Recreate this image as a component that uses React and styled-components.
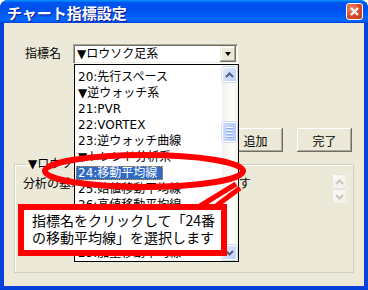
import styled, { createGlobalStyle } from "styled-components";

const GlobalStyle = createGlobalStyle`
  html, body {
    margin: 0;
    padding: 0;
    background: #fff;
  }
  body {
    font-family: "DejaVu Sans", "Noto Sans CJK JP", sans-serif;
    font-size: 12px;
    color: #000;
  }
`;

const Window = styled.div`
  position: relative;
  width: 368px;
  height: 290px;
  display: flex;
  flex-direction: column;
  background: #0841d8;
  border-radius: 8px 8px 0 0;
  overflow: hidden;
`;

const TitleBar = styled.div`
  height: 23px;
  flex-shrink: 0;
  display: flex;
  align-items: center;
  justify-content: space-between;
  padding: 0 5px 0 7px;
  background: linear-gradient(
    #0997ff 0%,
    #0053ee 12%,
    #0050ee 40%,
    #0066ff 85%,
    #0060ff 92%,
    #003dd7 100%
  );
`;

const TitleText = styled.span`
  font-family: "Noto Sans CJK JP", sans-serif;
  font-weight: 700;
  font-size: 15px;
  line-height: 15px;
  margin-top: 2px;
  color: #fff;
  text-shadow: 1px 1px #0f1089;
`;

const CloseButton = styled.div`
  width: 17px;
  height: 17px;
  box-sizing: border-box;
  border: 1px solid #fff;
  border-radius: 3px;
  background: radial-gradient(circle at 30% 30%, #f08a6c, #d9482a 55%, #c0391a);
  display: flex;
  align-items: center;
  justify-content: center;
`;

const Body = styled.div`
  flex: 1;
  margin: 0 4px 4px;
  background: #ece9d8;
  padding-top: 21px;
  display: flex;
  flex-direction: column;
`;

const FieldRow = styled.div`
  display: flex;
  align-items: center;
  gap: 12px;
  padding-left: 21px;
`;

const Label = styled.span`
  font-size: 12px;
  line-height: 14px;
`;

const Combo = styled.div`
  position: relative;
  width: 165px;
  height: 20px;
  box-sizing: border-box;
  background: #fff;
  border: 1px solid;
  border-color: #aca899 #fff #fff #aca899;
  box-shadow: inset 1px 1px #716f64, inset -1px -1px #f1efe2;
  display: flex;
  align-items: center;
  padding: 1px;
`;

const ComboText = styled.span`
  flex: 1;
  padding-left: 2px;
  line-height: 16px;
`;

const DropButton = styled.div`
  width: 16px;
  height: 16px;
  box-sizing: border-box;
  background: #ece9d8;
  box-shadow: inset -1px -1px #716f64, inset 1px 1px #f1efe2,
    inset -2px -2px #aca899, inset 2px 2px #fff;
  display: flex;
  align-items: center;
  justify-content: center;

  &::after {
    content: "";
    border-left: 3.5px solid transparent;
    border-right: 3.5px solid transparent;
    border-top: 4px solid #000;
  }
`;

const ListBox = styled.div`
  position: absolute;
  top: calc(100% + 1px);
  left: 0;
  width: 165px;
  height: 198px;
  box-sizing: border-box;
  border: 1px solid #000;
  background: #fff;
  display: flex;
  z-index: 2;
`;

const Items = styled.div`
  flex: 1;
  padding-top: 4px;
  overflow: hidden;
`;

const Item = styled.div`
  height: 16px;
  line-height: 16px;
  padding-left: 1px;
  white-space: nowrap;
`;

const ItemText = styled.span`
  display: inline-block;
  padding: 0 5px 0 1px;
  line-height: 12px;
  border: 1px solid transparent;
  ${(p) =>
    p.$selected &&
    `
    background: #316ac5;
    color: #fff;
    border: 1px dotted #ce953a;
  `}
`;

const ScrollBar = styled.div`
  width: 16px;
  display: flex;
  flex-direction: column;
  padding: 2px 0 0;
  box-sizing: border-box;
  background: linear-gradient(to right, #f3f1ec, #fefefb 70%, #f0efe6);
`;

const ScrollArrow = styled.div`
  width: 15px;
  height: 15px;
  box-sizing: border-box;
  border-radius: 2px;
  border: 1px solid ${(p) => (p.$disabled ? "#e8e6dc" : "#fff")};
  background: ${(p) =>
    p.$disabled
      ? "linear-gradient(135deg, #fbfbf8, #f0efe8)"
      : "linear-gradient(135deg, #e3ecfe, #bcd0fa)"};
  box-shadow: ${(p) => (p.$disabled ? "none" : "0 0 0 0.5px #a7bdf0")};
  display: flex;
  align-items: center;
  justify-content: center;
`;

const Thumb = styled.div`
  width: 15px;
  height: 20px;
  margin-top: ${(p) => p.$offset}px;
  box-sizing: border-box;
  border: 1px solid #fff;
  border-radius: 2px;
  background: linear-gradient(to right, #c9d8fc, #b6cbf9);
  box-shadow: 0 0 0 0.5px #a7bdf0;
  display: flex;
  flex-direction: column;
  align-items: center;
  justify-content: center;
  gap: 1px;
`;

const Grip = styled.div`
  width: 7px;
  height: 1px;
  background: #eef4fe;
  border-bottom: 1px solid #8cb0f8;
`;

const Spacer = styled.div`
  flex: 1;
`;

const ButtonRow = styled.div`
  display: flex;
  justify-content: flex-end;
  gap: 14px;
  padding-right: 12px;
  margin-top: 64px;
`;

const Button = styled.div`
  width: 55px;
  height: 24px;
  box-sizing: border-box;
  background: #ece9d8;
  box-shadow: inset -1px -1px #716f64, inset 1px 1px #fff,
    inset -2px -2px #aca899;
  display: flex;
  align-items: center;
  justify-content: center;
  font-family: "Noto Sans CJK JP", sans-serif;
  font-size: 12px;
`;

const GroupBox = styled.fieldset`
  margin: 5px 10px 0 10px;
  padding: 2px 5px 4px 5px;
  height: 116px;
  box-sizing: border-box;
  border: 1px solid #d0cebf;
  box-shadow: inset 1px 1px #fff;
  min-width: 0;
  display: flex;
`;

const Legend = styled.legend`
  padding: 0 1px;
  margin-left: 7px;
  line-height: 14px;
  font-size: 12px;
`;

const GroupInner = styled.div`
  flex: 1;
  display: flex;
  margin-top: 1px;
`;

const MemoText = styled.div`
  flex: 1;
  padding: 2px 0 0 3px;
  font-family: "Noto Sans CJK JP", sans-serif;
  font-size: 12px;
  line-height: 14px;
  white-space: nowrap;
  overflow: hidden;
`;

const MemoScroll = styled(ScrollBar)`
  padding: 0;
  justify-content: space-between;
`;

const Callout = styled.div`
  position: absolute;
  left: 18px;
  top: 204px;
  width: 209px;
  height: 52px;
  box-sizing: border-box;
  border: 6px solid #ff0000;
  background: #fff;
  padding: 2px 0 0 8px;
  font-family: "Noto Sans CJK JP", sans-serif;
  font-size: 14px;
  line-height: 17px;
  white-space: nowrap;
  z-index: 4;
`;

const Marks = styled.svg`
  position: absolute;
  left: 0;
  top: 0;
  pointer-events: none;
  z-index: 3;
`;

const Chevron = ({ up, color }) => (
  <svg width="9" height="6" viewBox="0 0 9 6">
    <polyline
      points={up ? "1,5 4.5,1.5 8,5" : "1,1 4.5,4.5 8,1"}
      fill="none"
      stroke={color}
      strokeWidth="2"
    />
  </svg>
);

const items = [
  "20:先行スペース",
  "▼逆ウォッチ系",
  "21:PVR",
  "22:VORTEX",
  "23:逆ウォッチ曲線",
  "▼トレンド分析系",
  "24:移動平均線",
  "25:始値移動平均線",
  "26:高値移動平均線",
  "27:安値移動平均線",
  "28:終値移動平均線",
  "29:加重移動平均線",
];

const App = () => {
  return (
    <>
      <GlobalStyle />
      <Window>
        <TitleBar>
          <TitleText>チャート指標設定</TitleText>
          <CloseButton>
            <svg width="9" height="9" viewBox="0 0 9 9">
              <path d="M1 1 L8 8 M8 1 L1 8" stroke="#fff" strokeWidth="2.2" />
            </svg>
          </CloseButton>
        </TitleBar>
        <Body>
          <FieldRow>
            <Label>指標名</Label>
            <Combo>
              <ComboText>▼ロウソク足系</ComboText>
              <DropButton />
              <ListBox>
                <Items>
                  {items.map((t) => (
                    <Item key={t}>
                      <ItemText $selected={t === "24:移動平均線"}>{t}</ItemText>
                    </Item>
                  ))}
                </Items>
                <ScrollBar>
                  <ScrollArrow>
                    <Chevron up color="#4d6185" />
                  </ScrollArrow>
                  <Thumb $offset={40}>
                    <Grip />
                    <Grip />
                    <Grip />
                    <Grip />
                  </Thumb>
                  <Spacer />
                  <ScrollArrow style={{ marginBottom: 1 }}>
                    <Chevron color="#4d6185" />
                  </ScrollArrow>
                </ScrollBar>
              </ListBox>
            </Combo>
          </FieldRow>
          <ButtonRow>
            <Button>追加</Button>
            <Button>完了</Button>
          </ButtonRow>
          <GroupBox>
            <Legend>▼ロウソク足系</Legend>
            <GroupInner>
              <MemoText>分析の基本となるローソク足を表示します</MemoText>
              <MemoScroll>
                <ScrollArrow $disabled>
                  <Chevron up color="#c9c7ba" />
                </ScrollArrow>
                <ScrollArrow $disabled>
                  <Chevron color="#c9c7ba" />
                </ScrollArrow>
              </MemoScroll>
            </GroupInner>
          </GroupBox>
        </Body>
        <Marks width="368" height="290" viewBox="0 0 368 290">
          <ellipse cx="144" cy="171" rx="99" ry="16" fill="none" stroke="#ff0000" strokeWidth="6" />
          <path d="M236 184 L200 206 M240 188 L216 206" stroke="#ff0000" strokeWidth="5" fill="none" />
        </Marks>
        <Callout>
          指標名をクリックして「24番
          <br />
          の移動平均線」を選択します
        </Callout>
      </Window>
    </>
  );
};

export default App;
